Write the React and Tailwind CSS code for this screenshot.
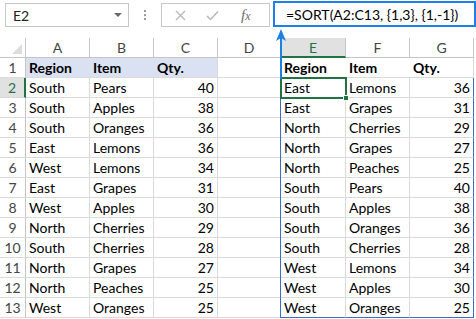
import React from "react";

const left = [
  ["South", "Pears", 40],
  ["South", "Apples", 38],
  ["South", "Oranges", 36],
  ["East", "Lemons", 36],
  ["West", "Lemons", 34],
  ["East", "Grapes", 31],
  ["West", "Apples", 30],
  ["North", "Cherries", 29],
  ["South", "Cherries", 28],
  ["North", "Grapes", 27],
  ["North", "Peaches", 25],
  ["West", "Oranges", 25],
];
const right = [
  ["East", "Lemons", 36],
  ["East", "Grapes", 31],
  ["North", "Cherries", 29],
  ["North", "Grapes", 27],
  ["North", "Peaches", 25],
  ["South", "Pears", 40],
  ["South", "Apples", 38],
  ["South", "Oranges", 36],
  ["South", "Cherries", 28],
  ["West", "Lemons", 34],
  ["West", "Apples", 30],
  ["West", "Oranges", 25],
];

const cols = ["A", "B", "C", "D", "E", "F", "G"];
const font = { fontFamily: "Lato, 'Open Sans', sans-serif" };

function Cell({ children, className = "" }) {
  return (
    <div
      className={
        "h-[20px] box-border border-r border-b border-[#dadada] flex items-center px-[3px] text-[14px] text-black overflow-hidden whitespace-nowrap " +
        className
      }
    >
      {children}
    </div>
  );
}

export default function App() {
  const rows = [];
  for (let r = 0; r < 13; r++) {
    const rowNum = r + 1;
    const sel = rowNum === 2;
    rows.push(
      <div
        key={"h" + r}
        className={
          "h-[20px] box-border border-b border-[#dadada] flex items-center justify-center text-[14px] " +
          (sel
            ? "bg-[#e1e1e1] text-[#217346] border-r-2 border-r-[#217346]"
            : "bg-white text-[#444] border-r border-r-[#c6c6c6]")
        }
      >
        {rowNum}
      </div>
    );
    if (r === 0) {
      rows.push(<Cell key="a1" className="bg-[#d9e1f2] border-r-0 font-bold">Region</Cell>);
      rows.push(<Cell key="b1" className="bg-[#d9e1f2] border-r-0 font-bold">Item</Cell>);
      rows.push(<Cell key="c1" className="bg-[#d9e1f2] font-bold">Qty.</Cell>);
      rows.push(<Cell key="d1" />);
      rows.push(<Cell key="e1" className="font-bold border-r-0">Region</Cell>);
      rows.push(<Cell key="f1" className="font-bold border-r-0">Item</Cell>);
      rows.push(<Cell key="g1" className="font-bold">Qty.</Cell>);
    } else {
      const L = left[r - 1];
      const R = right[r - 1];
      const last = r === 12;
      rows.push(<Cell key={"a" + r}>{L[0]}</Cell>);
      rows.push(<Cell key={"b" + r}>{L[1]}</Cell>);
      rows.push(<Cell key={"c" + r} className="justify-end">{L[2]}</Cell>);
      rows.push(<Cell key={"d" + r} />);
      rows.push(<Cell key={"e" + r} className={last ? "border-b-[#3a6fc4]" : ""}>{R[0]}</Cell>);
      rows.push(<Cell key={"f" + r} className={last ? "border-b-[#3a6fc4]" : ""}>{R[1]}</Cell>);
      rows.push(
        <Cell key={"g" + r} className={"justify-end border-r-[#3a6fc4] " + (last ? "border-b-[#3a6fc4]" : "")}>
          {R[2]}
        </Cell>
      );
    }
  }

  return (
    <div className="relative w-[476px] h-[319px] bg-white overflow-hidden" style={font}>
      {/* formula bar */}
      <div className="flex items-start h-[38px]">
        <div className="ml-[5px] mt-[3px] w-[124px] h-[24px] box-border border border-[#c6c6c6] flex items-center justify-between pl-[7px] pr-[6px] text-[14px] text-[#222]">
          <span>E2</span>
          <svg width="8" height="5" viewBox="0 0 8 5"><path d="M0 0 L8 0 L4 4 Z" fill="#6b6b6b" /></svg>
        </div>
        <div className="w-[32px] h-[30px] flex flex-col items-center justify-center gap-[2px]">
          <div className="w-[2px] h-[2px] bg-[#9a9a9a]" />
          <div className="w-[2px] h-[2px] bg-[#9a9a9a]" />
          <div className="w-[2px] h-[2px] bg-[#9a9a9a]" />
        </div>
        <div className="mt-[3px] w-[109px] h-[24px] box-border border border-[#c6c6c6] flex items-center">
          <svg className="ml-[13px]" width="11" height="11" viewBox="0 0 11 11">
            <path d="M1 1 L10 10 M10 1 L1 10" stroke="#b9b9b9" strokeWidth="1.3" />
          </svg>
          <svg className="ml-[20px]" width="13" height="11" viewBox="0 0 13 11">
            <path d="M1 6 L4.5 9.5 L12 1.5" stroke="#b9b9b9" strokeWidth="1.5" fill="none" />
          </svg>
          <span
            className="ml-[22px] text-[15px] italic text-[#6b6b6b]"
            style={{ fontFamily: "'Liberation Serif', serif" }}
          >
            f<span className="text-[12px]">x</span>
          </span>
        </div>
        <div className="ml-[3px] mt-[1px] w-[203px] h-[26px] box-border border-2 border-[#1c80e4] flex items-center pl-[11px] text-[14px] text-black whitespace-nowrap">
          =SORT(A2:C13, {"{1,3}"}, {"{1,-1}"})
        </div>
      </div>

      {/* sheet */}
      <div className="grid grid-cols-[26px_64px_64px_64px_63px_65px_64px_64px]">
        <div className="h-[20px] box-border border-r border-b border-[#c6c6c6] bg-white relative">
          <svg className="absolute right-[3px] bottom-[3px]" width="10" height="10" viewBox="0 0 10 10">
            <path d="M10 0 L10 10 L0 10 Z" fill="#dcdcdc" />
          </svg>
        </div>
        {cols.map((c) =>
          c === "E" ? (
            <div
              key={c}
              className="h-[20px] box-border border-r border-[#c6c6c6] border-b-2 border-b-[#217346] bg-[#e1e1e1] text-[#217346] flex items-center justify-center text-[14px]"
            >
              {c}
            </div>
          ) : (
            <div
              key={c}
              className="h-[20px] box-border border-r border-b border-[#c6c6c6] bg-white text-[#444] flex items-center justify-center text-[14px]"
            >
              {c}
            </div>
          )
        )}
        {rows}
      </div>

      {/* spill range left border */}
      <div className="absolute left-[280px] top-[78px] w-[1px] h-[240px] bg-[#3a6fc4]" />

      {/* selection E2 */}
      <div className="absolute left-[280px] top-[77px] w-[67px] h-[22px] border-2 border-[#217346]" />
      <div className="absolute left-[343px] top-[95px] w-[6px] h-[6px] bg-[#217346] border border-white" />

      {/* arrow */}
      <svg className="absolute left-[274px] top-[27px]" width="14" height="52" viewBox="0 0 14 52">
        <path d="M7 6 L7 52" stroke="#1c80e4" strokeWidth="2" />
        <path d="M7 2 L12 14 L7 11 L2 14 Z" fill="#1c80e4" />
      </svg>
    </div>
  );
}
